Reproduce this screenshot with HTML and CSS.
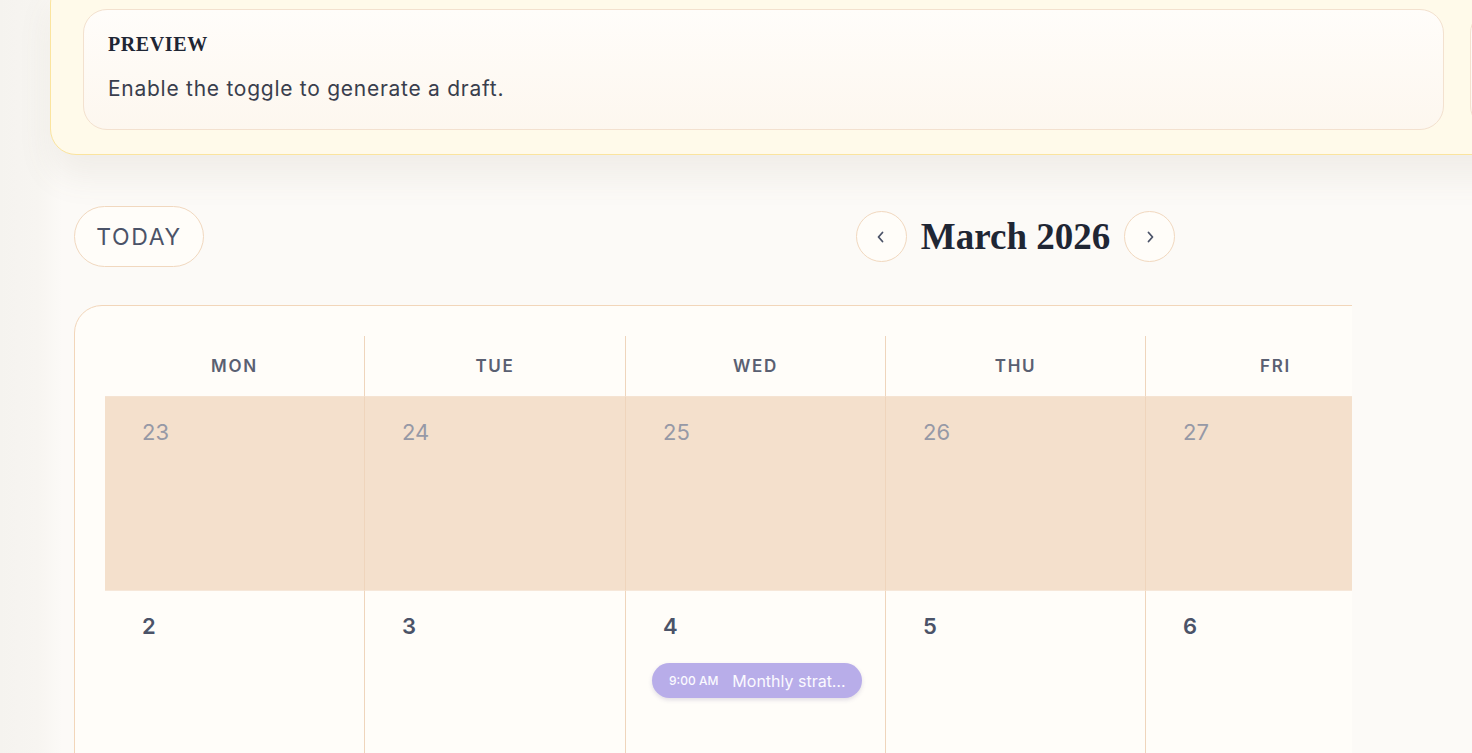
FILE: index.html
```html
<!DOCTYPE html>
<html lang="en">
 <head>
   <meta charset="UTF-8">
   <title>Calendar</title>
   <link rel="stylesheet" href="styles.css">
 </head>
 <body>
  <div class="main">
	<!-- draft block, its top is scrolled out of view -->
	<div class="draft-card">
		<div class="preview">
			<div class="preview-title">PREVIEW</div>
			<div class="preview-text">Enable the toggle to generate a draft.</div>
		</div>
		<div class="preview"></div>
	</div>

	<div class="calendar">
		<div class="cal-head">
			<button class="today-btn">TODAY</button>
			<div class="month-nav">
				<button class="nav-btn" aria-label="Previous month">
					<svg width="12" height="14" viewBox="0 0 12 14"><path d="M7.5 2.5 L3.5 7 L7.5 11.5" fill="none" stroke="#4b5368" stroke-width="1.8" stroke-linecap="round" stroke-linejoin="round"/></svg>
				</button>
				<h2 class="month-title">March 2026</h2>
				<button class="nav-btn" aria-label="Next month">
					<svg width="12" height="14" viewBox="0 0 12 14"><path d="M4.5 2.5 L8.5 7 L4.5 11.5" fill="none" stroke="#4b5368" stroke-width="1.8" stroke-linecap="round" stroke-linejoin="round"/></svg>
				</button>
			</div>
			<div></div>
		</div>

		<div class="cal-clip">
			<div class="cal-card">
				<div class="cal-grid">
					<div class="dow">MON</div>
					<div class="dow">TUE</div>
					<div class="dow">WED</div>
					<div class="dow">THU</div>
					<div class="dow">FRI</div>
					<div class="dow">SAT</div>
					<div class="dow">SUN</div>

					<div class="day out"><span class="num">23</span></div>
					<div class="day out"><span class="num">24</span></div>
					<div class="day out"><span class="num">25</span></div>
					<div class="day out"><span class="num">26</span></div>
					<div class="day out"><span class="num">27</span></div>
					<div class="day out"><span class="num">28</span></div>
					<div class="day"><span class="num">1</span></div>

					<div class="day"><span class="num">2</span></div>
					<div class="day"><span class="num">3</span></div>
					<div class="day">
						<span class="num">4</span>
						<div class="event">
							<span class="event-time">9:00 AM</span>
							<span class="event-name">Monthly strategy review</span>
						</div>
					</div>
					<div class="day"><span class="num">5</span></div>
					<div class="day"><span class="num">6</span></div>
					<div class="day"><span class="num">7</span></div>
					<div class="day"><span class="num">8</span></div>
				</div>
			</div>
		</div>
	</div>
  </div>
 </body>
</html>
```

FILE: styles.css
```css
body{
	margin:0;
	overflow:hidden;
	height:753px;
	font-family:Inter, "Open Sans", sans-serif;
	color:#3d4252;
	background:linear-gradient(to right, #f5f3ef 0, #f7f5f1 38px, #fcfaf7 62px, #fcfaf7 100%);
}
.main{
	padding-left:50px;
}

/* 上面的草稿卡片 */
.draft-card{
	display:flex;
	gap:26px;
	width:max-content;
	margin-top:-23px;
	padding:31px 32px 24px;
	background:#fffaea;
	border:1.5px solid #fbe49e;
	border-radius:26px;
	box-shadow:0 22px 34px rgba(120,110,90,0.09);
}
.preview{
	box-sizing:border-box;
	width:1361px;
	height:121px;
	padding:22px 24px;
	border:1.5px solid #f3e1cf;
	border-radius:24px;
	background:linear-gradient(#fffdfa, #fdf7ef);
}
.preview-title{
	font-family:"Liberation Serif", serif;
	font-weight:bold;
	font-size:20px;
	letter-spacing:0.03em;
	color:#1f2634;
	line-height:24px;
}
.preview-text{
	margin-top:21px;
	font-size:21px;
	letter-spacing:0.035em;
	line-height:24px;
	color:#393e4d;
}

/* 日历 */
.calendar{
	margin:51px 0 0 24px;
}
.cal-head{
	display:grid;
	grid-template-columns:1fr auto 1fr;
	align-items:center;
	width:1883px;
}
.today-btn{
	justify-self:start;
	width:130px;
	height:61px;
	padding:0;
	border:1.5px solid #f1d8bf;
	border-radius:31px;
	background:#fffdf9;
	font-family:Inter, sans-serif;
	font-size:23px;
	letter-spacing:0.07em;
	color:#4b5368;
}
.month-nav{
	display:flex;
	align-items:center;
	gap:14px;
}
.nav-btn{
	display:flex;
	align-items:center;
	justify-content:center;
	width:51px;
	height:51px;
	padding:0;
	border:1.5px solid #f1d8bf;
	border-radius:50%;
	background:#fffdf9;
}
.month-title{
	margin:0;
	font-family:"Liberation Serif", serif;
	font-weight:bold;
	font-size:37px;
	color:#1f2634;
}

.cal-clip{
	width:1278px;
	overflow:hidden;
	margin-top:38px;
}
.cal-card{
	width:max-content;
	padding:30px;
	background:#fffdf9;
	border:1.5px solid #f2d6ba;
	border-radius:28px;
}
.cal-grid{
	display:grid;
	grid-template-columns:259px 261px repeat(5, 260px);
	border-radius:20px 0 0 0;
	overflow:hidden;
}
.dow{
	height:60px;
	line-height:60px;
	text-align:center;
	font-size:17px;
	font-weight:600;
	letter-spacing:0.1em;
	color:#5a6072;
	border-left:1px solid #efd5bc;
}
.dow:nth-child(7n+1), .day:nth-child(7n+1){
	border-left:none;
}
.day{
	box-sizing:border-box;
	height:194px;
	padding:22px 37px;
	border-left:1px solid #efd5bc;
	border-top:1px solid #f6e7d9;
}
.day.out{
	background:#f4e0cc;
	border-top-color:#f5e3d2;
}
.num{
	display:block;
	font-size:22px;
	line-height:26px;
	font-weight:600;
	color:#4b5368;
}
.day.out .num{
	font-weight:400;
	color:#9699a6;
}
.event{
	display:flex;
	align-items:center;
	gap:14px;
	box-sizing:border-box;
	width:210px;
	height:35px;
	margin:24px 0 0 -11px;
	padding:0 12px 0 17px;
	border-radius:18px;
	background:#b8ade9;
	box-shadow:0 2px 4px rgba(90,80,140,0.18);
	color:#fbfaff;
	white-space:nowrap;
}
.event-time{
	font-size:12px;
	font-weight:500;
}
.event-name{
	font-size:16px;
	overflow:hidden;
	text-overflow:ellipsis;
}
```
